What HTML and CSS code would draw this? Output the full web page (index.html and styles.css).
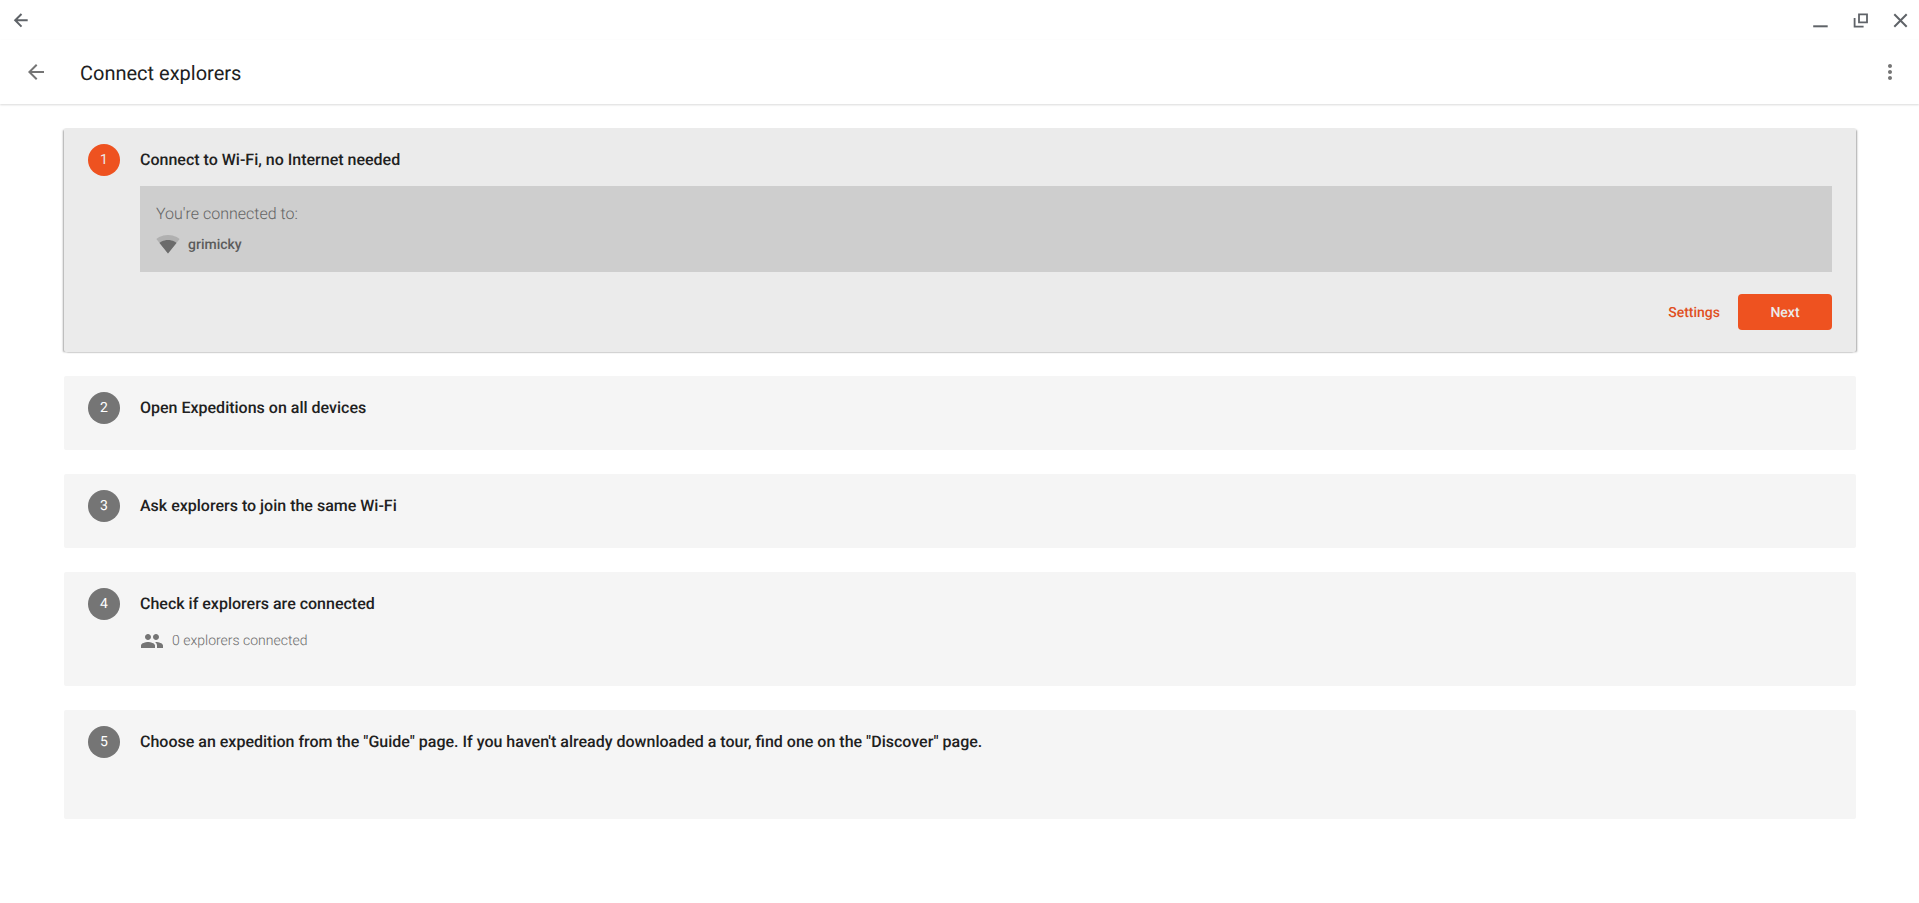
FILE: index.html
```html
<!DOCTYPE html>
<html lang="en">
<head>
    <meta charset="UTF-8">
    <meta name="viewport" content="width=device-width, initial-scale=1.0">
    <title>Connect explorers</title>
    <link rel="stylesheet" href="styles.css">
</head>
<body>
    <div class="window-bar">
        <button class="window-btn" aria-label="Back">
            <svg width="20" height="20" viewBox="0 0 20 20"><path d="M17.700 10.300H5M11.500 4l-6.300 6.300 6.300 6.300" fill="none" stroke="#5f6368" stroke-width="2"/></svg>
        </button>
        <div class="window-controls">
            <button class="window-btn" aria-label="Minimize">
                <svg width="20" height="20" viewBox="0 0 20 20"><path d="M4.200 16.300h14.500" stroke="#5f6368" stroke-width="2"/></svg>
            </button>
            <button class="window-btn" aria-label="Restore">
                <svg width="20" height="20" viewBox="0 0 20 20"><path d="M10 4.300h8v8h-8zM5.600 8v8.700h9" fill="none" stroke="#5f6368" stroke-width="1.800"/></svg>
            </button>
            <button class="window-btn" aria-label="Close">
                <svg width="20" height="20" viewBox="0 0 20 20"><path d="M5.300 4.300l12.400 12.400M17.700 4.300L5.300 16.700" stroke="#5f6368" stroke-width="2"/></svg>
            </button>
        </div>
    </div>

    <header class="toolbar">
        <button class="icon-btn" aria-label="Back">
            <svg width="24" height="24" viewBox="0 0 24 24" fill="#757575"><path d="M20 11H7.830l5.590-5.590L12 4l-8 8 8 8 1.410-1.410L7.830 13H20v-2z"/></svg>
        </button>
        <h1 class="title">Connect explorers</h1>
        <button class="icon-btn" aria-label="More options">
            <svg width="24" height="24" viewBox="0 0 24 24" fill="#757575"><path d="M12 8c1.100 0 2-.9 2-2s-.9-2-2-2-2 .9-2 2 .9 2 2 2zm0 2c-1.100 0-2 .9-2 2s.9 2 2 2 2-.9 2-2-.9-2-2-2zm0 6c-1.100 0-2 .9-2 2s.9 2 2 2 2-.9 2-2-.9-2-2-2z"/></svg>
        </button>
    </header>

    <main class="steps">
        <section class="step active">
            <span class="step-number">1</span>
            <div class="step-body">
                <h2 class="step-title">Connect to Wi-Fi, no Internet needed</h2>
                <div class="wifi-box">
                    <p class="wifi-label">You're connected to:</p>
                    <p class="wifi-name">
                        <svg width="24" height="24" viewBox="0 0 24 24" fill="#6b6b6b">
                            <path fill-opacity=".3" d="M12.010 21.490L23.640 7c-.45-.34-4.930-4-11.640-4C5.280 3 .81 6.660.36 7l11.630 14.490.01.01.01-.01z"/>
                            <path d="M3.530 10.950l8.460 10.540.01.01.01-.01 8.460-10.540C20.040 10.620 16.810 8 12 8c-4.810 0-8.040 2.620-8.470 2.950z"/>
                        </svg>
                        grimicky
                    </p>
                </div>
                <div class="actions">
                    <button class="btn btn-text">Settings</button>
                    <button class="btn btn-primary">Next</button>
                </div>
            </div>
        </section>

        <section class="step">
            <span class="step-number">2</span>
            <div class="step-body">
                <h2 class="step-title">Open Expeditions on all devices</h2>
            </div>
        </section>

        <section class="step">
            <span class="step-number">3</span>
            <div class="step-body">
                <h2 class="step-title">Ask explorers to join the same Wi-Fi</h2>
            </div>
        </section>

        <section class="step">
            <span class="step-number">4</span>
            <div class="step-body">
                <h2 class="step-title">Check if explorers are connected</h2>
                <p class="explorers">
                    <svg width="24" height="24" viewBox="0 0 24 24" fill="#757575"><path d="M16 12c1.660 0 2.990-1.340 2.990-3S17.660 6 16 6c-1.660 0-3 1.340-3 3s1.340 3 3 3zm-8 0c1.660 0 2.990-1.340 2.990-3S9.660 6 8 6C6.340 6 5 7.340 5 9s1.340 3 3 3zm0 2c-2.330 0-7 1.170-7 3.500V20h14v-2.500c0-2.330-4.670-3.500-7-3.500zm8 0c-.29 0-.62.020-.97.050 1.160.84 1.970 1.970 1.970 3.450V20h6v-2.500c0-2.330-4.670-3.500-7-3.500z"/></svg>
                    0 explorers connected
                </p>
            </div>
        </section>

        <section class="step last">
            <span class="step-number">5</span>
            <div class="step-body">
                <h2 class="step-title">Choose an expedition from the "Guide" page. If you haven't already downloaded a tour, find one on the "Discover" page.</h2>
            </div>
        </section>
    </main>
</body>
</html>
```
FILE: styles.css
```css
* {
    margin: 0;
    padding: 0;
    box-sizing: border-box;
}

body {
    font-family: Roboto, sans-serif;
    background: #fff;
    color: #212121;
    text-rendering: geometricPrecision;
}

button {
    border: none;
    background: none;
    font-family: inherit;
    text-rendering: inherit;
    cursor: pointer;
}

svg {
    display: block;
    flex: none;
}

/* Window bar */
.window-bar {
    display: flex;
    justify-content: space-between;
    height: 40px;
}

.window-controls {
    display: flex;
}

.window-btn {
    display: flex;
    align-items: center;
    justify-content: center;
    width: 40px;
    height: 40px;
}

/* Toolbar */
.toolbar {
    display: flex;
    align-items: center;
    height: 64px;
    padding: 0 5px 0 12px;
    box-shadow: 0 1px 2px rgba(0, 0, 0, 0.15);
}

.icon-btn {
    display: flex;
    align-items: center;
    justify-content: center;
    width: 48px;
    height: 48px;
}

.title {
    flex: 1;
    margin-left: 20px;
    padding-top: 2px;
    font-size: 20px;
    font-weight: 400;
    line-height: 24px;
}

/* Steps */
.steps {
    display: flex;
    flex-direction: column;
    gap: 24px;
    padding: 24px 63px 24px 64px;
}

.step {
    display: flex;
    gap: 20px;
    padding: 16px 24px 26px;
    background: #f5f5f5;
    border-radius: 2px;
}

.step.active {
    padding-bottom: 22px;
    background: #ebebeb;
    box-shadow: 2px 1px 2px -1px rgba(0, 0, 0, 0.35), -2px 1px 2px -1px rgba(0, 0, 0, 0.35);
}

.step.last {
    padding-bottom: 61px;
}

.step-number {
    flex: none;
    width: 32px;
    height: 32px;
    border-radius: 50%;
    background: #757575;
    color: #fff;
    font-size: 14px;
    line-height: 32px;
    text-align: center;
}

.active .step-number {
    background: #ee5220;
    color: #ebebeb;
}

.step-body {
    flex: 1;
}

.step-title {
    font-size: 16px;
    font-weight: 500;
    line-height: 32px;
}

.wifi-box {
    margin-top: 10px;
    padding: 16px 16px 14px;
    background: #cecece;
    color: #636363;
}

.wifi-label {
    font-size: 16px;
    font-weight: 300;
    line-height: 24px;
}

.wifi-name,
.explorers {
    display: flex;
    align-items: flex-start;
    gap: 8px;
    font-size: 14px;
    line-height: 26px;
}

.wifi-name {
    margin-top: 6px;
    color: #5c5c5c;
    font-weight: 500;
}

.explorers {
    margin: 8px 0 6px;
    color: #6b6b6b;
    font-weight: 300;
}

.actions {
    display: flex;
    justify-content: flex-end;
    margin-top: 22px;
}

.btn {
    height: 36px;
    padding-top: 2px;
    border-radius: 4px;
    font-size: 14px;
    font-weight: 500;
}

.btn-text {
    padding-left: 18px;
    padding-right: 18px;
    color: #e0501f;
}

.btn-primary {
    width: 94px;
    background: #ee5220;
    color: #ebebeb;
}
```
